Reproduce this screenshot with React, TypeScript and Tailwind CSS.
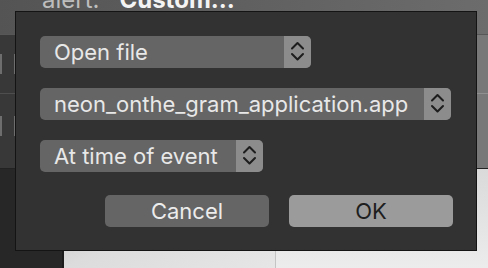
import React from 'react';

const font = { fontFamily: 'Inter, "Liberation Sans", sans-serif' };

function Chevrons() {
  return (
    <svg width="27" height="32" viewBox="0 0 27 32" fill="none">
      <path d="M8 12.5 L13.5 7 L19 12.5" stroke="#1d1d1d" strokeWidth="2" strokeLinecap="round" strokeLinejoin="round" />
      <path d="M8 18 L13.5 23.5 L19 18" stroke="#1d1d1d" strokeWidth="2" strokeLinecap="round" strokeLinejoin="round" />
    </svg>
  );
}

type PopupProps = {
  label: string;
  width: string;
};

function Popup({ label, width }: PopupProps) {
  return (
    <div className={`flex h-[32px] ${width} overflow-hidden rounded-[5px] bg-[#656565]`}>
      <div className="flex flex-1 items-center pl-[14px] text-[22px] leading-none text-[#e8e8e8]">{label}</div>
      <div className="flex w-[27px] items-center justify-center bg-[#8c8c8c]">
        <Chevrons />
      </div>
    </div>
  );
}

export default function App() {
  return (
    <div className="relative h-[268px] w-[488px] overflow-hidden bg-[#3a3a3a]" style={font}>
      {/* window behind the sheet */}
      <div className="flex h-[34px] items-end bg-gradient-to-r from-[#545454] to-[#6c6c6c] pb-[22px] pl-[42px] text-[24px] leading-none">
        <span className="text-[#bdbdbd]">alert:</span>
        <span className="ml-[20px] font-bold text-[#f4f4f4]">Custom...</span>
      </div>
      <div className="flex h-[134px] border-t border-[#575757]">
        <div className="flex w-[16px] flex-col bg-[#383838]">
          <div className="flex h-[58px] items-center justify-between">
            <div className="h-[20px] w-[2px] bg-[#6e6e6e]" />
            <div className="h-[20px] w-[2px] bg-[#6e6e6e]" />
          </div>
          <div className="h-px bg-[#4e4e4e]" />
          <div className="flex h-[64px] items-center justify-between">
            <div className="h-[20px] w-[2px] bg-[#6e6e6e]" />
            <div className="h-[20px] w-[2px] bg-[#6e6e6e]" />
          </div>
        </div>
        <div className="flex-1" />
        <div className="flex w-[12px] flex-col bg-[#787878]">
          <div className="h-[58px]" />
          <div className="h-px bg-[#909090]" />
        </div>
      </div>
      <div className="flex h-[100px] border-t border-[#222]">
        <div className="w-[64px] border-r-2 border-[#1b1b1b] bg-[#272727]" />
        <div className="w-[212px] border-r border-[#c4c4c4] bg-gradient-to-br from-[#b8b8b8] via-[#dcdcdc] to-[#e6e6e6]" />
        <div className="flex-1 bg-gradient-to-b from-[#dadada] to-[#ececec]" />
      </div>

      {/* sheet */}
      <div className="absolute left-[15px] top-[11px] flex h-[240px] w-[462px] flex-col border border-[#141414] bg-[#323232] pb-[23px] pl-[24px] pr-[23px] pt-[24px]">
        <div className="flex flex-col gap-[20px]">
          <Popup label="Open file" width="w-[271px]" />
          <Popup label="neon_onthe_gram_application.app" width="w-[411px]" />
          <Popup label="At time of event" width="w-[223px]" />
        </div>
        <div className="mt-auto flex justify-end gap-[20px] text-[22px] leading-none">
          <button className="flex h-[32px] w-[164px] items-center justify-center rounded-[5px] bg-[#656565] text-[#ececec]">
            Cancel
          </button>
          <button className="flex h-[32px] w-[164px] items-center justify-center rounded-[5px] bg-[#9b9b9b] text-[#1e1e1e]">
            OK
          </button>
        </div>
      </div>
    </div>
  );
}
